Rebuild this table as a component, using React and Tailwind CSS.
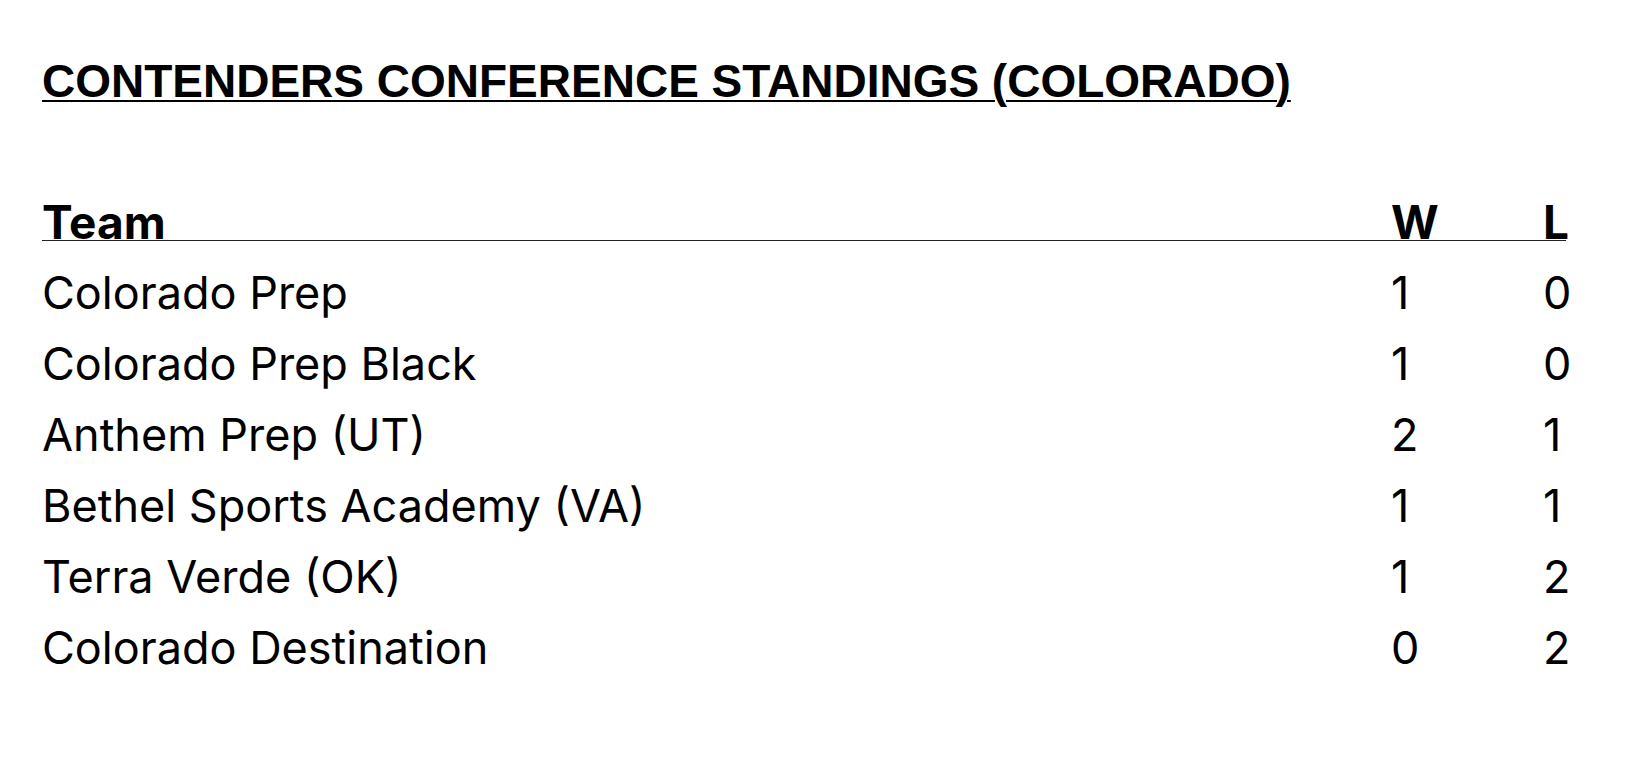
const rows = [
  { team: "Colorado Prep", w: 1, l: 0 },
  { team: "Colorado Prep Black", w: 1, l: 0 },
  { team: "Anthem Prep (UT)", w: 2, l: 1 },
  { team: "Bethel Sports Academy (VA)", w: 1, l: 1 },
  { team: "Terra Verde (OK)", w: 1, l: 2 },
  { team: "Colorado Destination", w: 0, l: 2 },
];

export default function App() {
  return (
    <div className="min-h-screen bg-white text-black px-[42px] pt-[55px]">
      <h1 className="font-['Liberation_Sans',Arial,sans-serif] font-bold text-[46px] leading-[52px] underline underline-offset-[3px] decoration-[1.5px]">
        CONTENDERS CONFERENCE STANDINGS (COLORADO)
      </h1>

      <div className="w-[1524px] mt-[97px] font-['Inter',sans-serif]">
        <div className="grid grid-cols-[1349px_152px_1fr] border-b-[1.5px] border-[#222] text-[46px] leading-[36px] font-bold">
          <div>Team</div>
          <div>W</div>
          <div>L</div>
        </div>
        <div className="pt-[16px]">
          {rows.map((r) => (
            <div key={r.team} className="grid grid-cols-[1349px_152px_1fr] text-[45px] leading-[71px]">
              <div>{r.team}</div>
              <div>{r.w}</div>
              <div>{r.l}</div>
            </div>
          ))}
        </div>
      </div>
    </div>
  );
}
